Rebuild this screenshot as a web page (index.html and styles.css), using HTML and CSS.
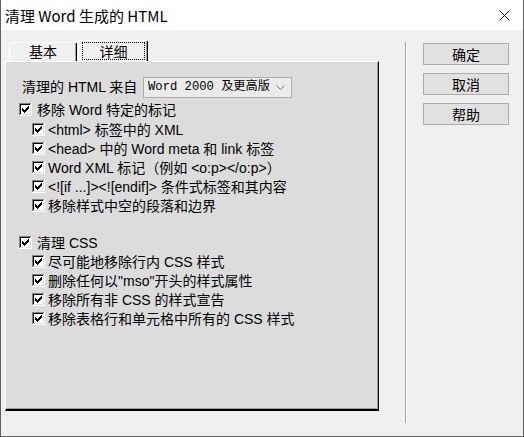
FILE: index.html
```html
<!DOCTYPE html>
<html lang="zh-CN">
<head>
<meta charset="utf-8">
<title>清理 Word 生成的 HTML</title>
<link rel="stylesheet" href="styles.css">
</head>
<body>
<svg class="defs" width="0" height="0" aria-hidden="true">
  <symbol id="cb" viewBox="0 0 13 13">
    <path fill="#808080" d="M0 0h12v1H1v11H0z"/>
    <path fill="#ffffff" d="M12 0h1v13H0v-1h12z"/>
    <path fill="#000000" d="M1 1h10v1H2v9H1z"/>
    <path fill="#dfdfdf" d="M11 1h1v11H1v-1h10z"/>
    <rect x="2" y="2" width="9" height="9" fill="#ffffff"/>
    <path fill="#000000" d="M3 5h1v1h1v1h1v-1h1v-1h1v-1h1v-1h1v3h-1v1h-1v1h-1v1h-1v1h-1v-1h-1v-1h-1z"/>
  </symbol>
</svg>
<div class="window">
  <div class="titlebar">
    <span class="title">清理 Word 生成的 HTML</span>
    <svg class="close" width="11" height="11" viewBox="0 0 11 11"><path d="M0.5 0.5L10.5 10.5M10.5 0.5L0.5 10.5" stroke="#111" stroke-width="1"/></svg>
  </div>
  <div class="main">
    <div class="tabarea">
      <div class="tabs">
        <div class="tab">基本</div>
        <div class="tab active"><span class="focus">详细</span></div>
      </div>
      <div class="panel">
        <div class="source">
          <span class="source-label">清理的 HTML 来自</span>
          <div class="select">
            <span class="select-text">Word 2000 及更高版</span>
            <svg class="chev" width="9" height="5" viewBox="0 0 9 5"><path d="M0.5 0.5L4.5 4.5L8.5 0.5" fill="none" stroke="#777" stroke-width="1"/></svg>
          </div>
        </div>
        <div class="group">
          <div class="row first"><svg class="cb"><use href="#cb"/></svg><span>移除 Word 特定的标记</span></div>
          <div class="row sub"><svg class="cb"><use href="#cb"/></svg><span>&lt;html&gt; 标签中的 XML</span></div>
          <div class="row sub"><svg class="cb"><use href="#cb"/></svg><span>&lt;head&gt; 中的 Word meta 和 link 标签</span></div>
          <div class="row sub"><svg class="cb"><use href="#cb"/></svg><span>Word XML 标记（例如 &lt;o:p&gt;&lt;/o:p&gt;）</span></div>
          <div class="row sub"><svg class="cb"><use href="#cb"/></svg><span>&lt;![if ...]&gt;&lt;![endif]&gt; 条件式标签和其内容</span></div>
          <div class="row sub"><svg class="cb"><use href="#cb"/></svg><span>移除样式中空的段落和边界</span></div>
        </div>
        <div class="group css">
          <div class="row"><svg class="cb"><use href="#cb"/></svg><span>清理 CSS</span></div>
          <div class="row sub"><svg class="cb"><use href="#cb"/></svg><span>尽可能地移除行内 CSS 样式</span></div>
          <div class="row sub"><svg class="cb"><use href="#cb"/></svg><span>删除任何以"mso"开头的样式属性</span></div>
          <div class="row sub"><svg class="cb"><use href="#cb"/></svg><span>移除所有非 CSS 的样式宣告</span></div>
          <div class="row sub"><svg class="cb"><use href="#cb"/></svg><span>移除表格行和单元格中所有的 CSS 样式</span></div>
        </div>
      </div>
    </div>
    <div class="separator"></div>
    <div class="buttons">
      <button class="btn">确定</button>
      <button class="btn">取消</button>
      <button class="btn">帮助</button>
    </div>
  </div>
</div>
</body>
</html>
```
FILE: styles.css
```css
* { box-sizing: border-box; }
html, body { margin: 0; padding: 0; background: #f0f0f0; }
.defs { position: absolute; width: 0; height: 0; overflow: hidden; }
.window {
  width: 524px;
  height: 437px;
  border: 1px solid #5f5f5f;
  border-top: none;
  background: #f0f0f0;
  font-family: "Liberation Sans", "Noto Sans CJK SC", sans-serif;
  color: #000;
  display: flex;
  flex-direction: column;
}
.titlebar {
  height: 30px;
  background: #ffffff;
  display: flex;
  align-items: center;
  justify-content: space-between;
  padding: 0 13px 0 4px;
}
.title {
  font-family: "Noto Sans CJK SC", sans-serif;
  font-size: 15px;
  line-height: 30px;
  padding-top: 1px;
}
.close { display: block; }
.main {
  display: flex;
  align-items: flex-start;
  flex: 1;
}
.tabarea {
  margin-left: 4px;
  margin-top: 10px;
  width: 374px;
  display: flex;
  flex-direction: column;
}
.tabs {
  height: 21px;
  display: flex;
  align-items: flex-end;
  padding-left: 4px;
}
.tab {
  width: 68px;
  height: 19px;
  background: #f0f0f0;
  border-top: 1px solid #ffffff;
  border-left: 1px solid #ffffff;
  border-right: 1px solid #000000;
  box-shadow: inset -1px 0 #a0a0a0;
  border-radius: 2px 2px 0 0;
  font-family: "Noto Sans CJK SC", sans-serif;
  font-size: 14px;
  line-height: 17px;
  text-align: center;
}
.tab.active {
  width: 70px;
  height: 21px;
  margin-left: 1px;
  padding: 1px 2px 0 3px;
  line-height: 17px;
}
.focus {
  display: block;
  height: 18px;
  border: 1px dotted #000;
  line-height: 16px;
}
.panel {
  height: 350px;
  background: #dcdcdc;
  border-top: 1px solid #ffffff;
  border-left: 1px solid #ffffff;
  border-right: 1px solid #000000;
  border-bottom: 2px solid #000000;
  box-shadow: inset -1px -1px #a0a0a0;
  padding: 15px 0 0 13px;
  font-size: 14px;
}
.source {
  display: flex;
  align-items: center;
  height: 21px;
  padding-left: 3px;
}
.source-label { width: 121px; line-height: 21px; }
.select {
  width: 149px;
  height: 21px;
  border: 1px solid #adadad;
  background: #ebebeb;
  display: flex;
  align-items: center;
  justify-content: space-between;
  padding: 0 6px 0 4px;
}
.select-text {
  font-family: "Liberation Mono", "Noto Sans CJK SC", monospace;
  font-size: 12.2px;
  line-height: 19px;
}
.chev { display: block; }
.group { display: flex; flex-direction: column; margin-top: 1px; }
.group.css { margin-top: 18px; }
.row {
  display: flex;
  align-items: center;
  height: 19px;
  line-height: 18px;
  white-space: nowrap;
}
.row.first { height: 21px; }
.row .cb { width: 13px; height: 13px; flex: none; margin-right: 5px; }
.row.sub { padding-left: 13px; }
.row.sub .cb { margin-right: 3px; }
.separator {
  width: 2px;
  height: 381px;
  margin-left: 26px;
  margin-top: 12px;
  border-left: 1px solid #a0a0a0;
  border-right: 1px solid #ffffff;
}
.buttons {
  margin-left: 16px;
  margin-top: 13px;
  display: flex;
  flex-direction: column;
  gap: 8px;
}
.btn {
  width: 86px;
  height: 22px;
  background: #e1e1e1;
  border: 1px solid #adadad;
  font-family: "Noto Sans CJK SC", sans-serif;
  font-size: 14px;
  line-height: 18px;
  padding: 0;
  color: #000;
}
```
